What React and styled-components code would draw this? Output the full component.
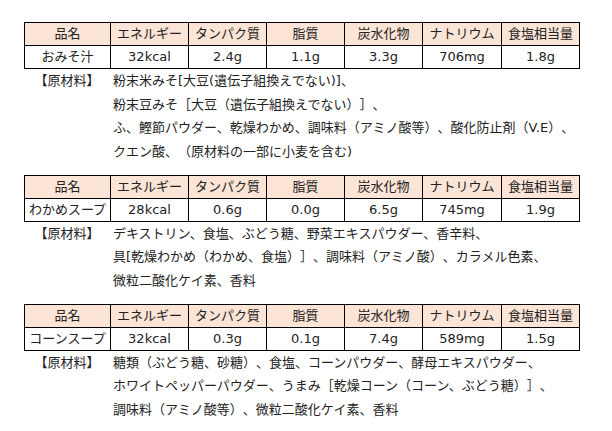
import React from 'react'
import styled, { createGlobalStyle } from 'styled-components'

const GlobalStyle = createGlobalStyle`
    body {
        margin: 0;
        background: #fff;
        font-family: "DejaVu Sans", "Noto Sans CJK JP", sans-serif;
        color: #222;
        text-spacing-trim: space-all;
    }
`

const Page = styled.div`
    padding: 22px 0 0 24px;
    width: 612px;
    height: 431px;
    box-sizing: border-box;
    overflow: hidden;
`

const Section = styled.section`
    margin-bottom: 11.5px;
`

const Table = styled.table`
    border-collapse: collapse;
    table-layout: fixed;
    font-size: 13px;
`

const Cell = styled.td`
    border: 1px solid #000;
    height: 22px;
    padding: 0;
    text-align: center;
    white-space: nowrap;
    overflow: hidden;
    line-height: 22px;
    font-weight: normal;
    background: ${(p) => (p.$head ? '#fce4d6' : '#fff')};
`

const Ingredients = styled.div`
    display: grid;
    grid-template-columns: 86px 1fr;
    font-size: 13px;
    line-height: 23.5px;
`

const Label = styled.div`
    text-align: center;
`

const Lines = styled.div`
    padding-left: 3px;
    white-space: nowrap;
`

const widths = [86, 78, 78, 78, 78, 79, 78]
const headers = ['品名', 'エネルギー', 'タンパク質', '脂質', '炭水化物', 'ナトリウム', '食塩相当量']

const products = [
    {
        row: ['おみそ汁', '32kcal', '2.4g', '1.1g', '3.3g', '706mg', '1.8g'],
        lines: [
            '粉末米みそ[大豆(遺伝子組換えでない)]、',
            '粉末豆みそ［大豆（遺伝子組換えでない）］、',
            'ふ、鰹節パウダー、乾燥わかめ、調味料（アミノ酸等）、酸化防止剤（V.E）、',
            'クエン酸、（原材料の一部に小麦を含む)',
        ],
    },
    {
        row: ['わかめスープ', '28kcal', '0.6g', '0.0g', '6.5g', '745mg', '1.9g'],
        lines: [
            'デキストリン、食塩、ぶどう糖、野菜エキスパウダー、香辛料、',
            '具[乾燥わかめ（わかめ、食塩）］、調味料（アミノ酸）、カラメル色素、',
            '微粒二酸化ケイ素、香料',
        ],
    },
    {
        row: ['コーンスープ', '32kcal', '0.3g', '0.1g', '7.4g', '589mg', '1.5g'],
        lines: [
            '糖類（ぶどう糖、砂糖）、食塩、コーンパウダー、酵母エキスパウダー、',
            'ホワイトペッパーパウダー、うまみ［乾燥コーン（コーン、ぶどう糖）］、',
            '調味料（アミノ酸等）、微粒二酸化ケイ素、香料',
        ],
    },
]

const App = () => {
    return (
        <Page>
            <GlobalStyle />
            {products.map((p) => (
                <Section key={p.row[0]}>
                    <Table>
                        <colgroup>
                            {widths.map((w, i) => <col key={i} style={{ width: w }} />)}
                        </colgroup>
                        <tbody>
                            <tr>
                                {headers.map((h) => <Cell as="th" key={h} $head>{h}</Cell>)}
                            </tr>
                            <tr>
                                {p.row.map((v, i) => <Cell key={i}>{v}</Cell>)}
                            </tr>
                        </tbody>
                    </Table>
                    <Ingredients>
                        <Label>【原材料】</Label>
                        <Lines>
                            {p.lines.map((l) => <div key={l}>{l}</div>)}
                        </Lines>
                    </Ingredients>
                </Section>
            ))}
        </Page>
    )
}

export default App
